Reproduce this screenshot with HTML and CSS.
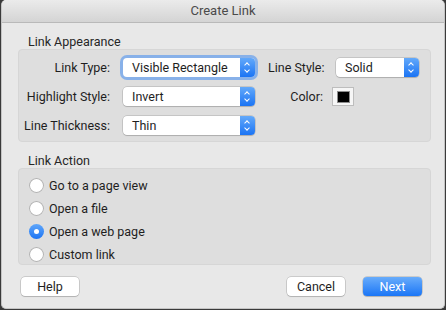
FILE: index.html
```html
<!DOCTYPE html>
<html lang="en">
<head>
  <meta charset="UTF-8" />
  <title>Create Link</title>
  <link rel="stylesheet" href="styles.css">
</head>
<body>

  <div class="window">
    <!-- Title bar -->
    <div class="titlebar">Create Link</div>

    <div class="content">
      <!-- Link Appearance -->
      <div class="section-title">Link Appearance</div>
      <div class="group appearance">
        <div class="label">Link Type:</div>
        <div class="select focused wide"><span>Visible Rectangle</span><i class="arrows"></i></div>
        <div class="label">Line Style:</div>
        <div class="select narrow"><span>Solid</span><i class="arrows"></i></div>

        <div class="label">Highlight Style:</div>
        <div class="select wide"><span>Invert</span><i class="arrows"></i></div>
        <div class="label">Color:</div>
        <div class="color-well"><b></b></div>

        <div class="label">Line Thickness:</div>
        <div class="select wide"><span>Thin</span><i class="arrows"></i></div>
      </div>

      <!-- Link Action -->
      <div class="section-title">Link Action</div>
      <div class="group action">
        <label class="radio"><i></i>Go to a page view</label>
        <label class="radio"><i></i>Open a file</label>
        <label class="radio checked"><i></i>Open a web page</label>
        <label class="radio"><i></i>Custom link</label>
      </div>

      <div class="buttons">
        <button class="btn">Help</button>
        <div class="spacer"></div>
        <button class="btn">Cancel</button>
        <button class="btn primary">Next</button>
      </div>
    </div>
  </div>

</body>
</html>
```

FILE: styles.css
```css
* {
  box-sizing: border-box;
  margin: 0;
  padding: 0;
}

body {
  background: #3a3a3a;
  font-family: Roboto, 'Liberation Sans', sans-serif;
  font-size: 12.5px;
  color: #1e1e1e;
  height: 310px;
  overflow: hidden;
}

.window {
  width: 444px;
  height: 309px;
  margin-left: 1px;
  background: #e8e8e8;
  border: 1px solid #c4c4c4;
  border-top: none;
  border-radius: 5px;
  overflow: hidden;
}

.titlebar {
  height: 23px;
  line-height: 22px;
  text-align: center;
  font-size: 13px;
  color: #4a4a4a;
  background: linear-gradient(#ebebeb, #d4d4d4);
  border-bottom: 1px solid #b9b9b9;
}

.content {
  padding: 11px 13px 0 16px;
}

.section-title {
  line-height: 15px;
  padding-left: 10px;
  color: #262626;
}

.group {
  background: #dedede;
  border: 1px solid #d6d6d6;
  border-radius: 4px;
}

/* appearance grid */
.appearance {
  display: grid;
  grid-template-columns: 91px 132px 55px auto;
  grid-auto-rows: 19px;
  column-gap: 13px;
  row-gap: 10px;
  align-items: center;
  padding: 8px 0 6px 0;
  margin-bottom: 11px;
}

.label {
  text-align: right;
  white-space: nowrap;
}

.select {
  position: relative;
  height: 19px;
  background: #fff;
  border-radius: 4px;
  box-shadow: 0 0 0 0.5px rgba(0, 0, 0, 0.22), 0 1px 1px rgba(0, 0, 0, 0.12);
  display: flex;
  align-items: center;
  padding-left: 9px;
}

.select.narrow {
  width: 83px;
}

.select.focused {
  box-shadow: 0 0 0 3px rgba(100, 158, 238, 0.7);
}

.arrows {
  position: absolute;
  top: 0;
  right: 0;
  width: 15px;
  height: 100%;
  border-radius: 0 4px 4px 0;
  background: linear-gradient(#63a9fa, #1b74f4);
}

.arrows::before,
.arrows::after {
  content: "";
  position: absolute;
  left: 5px;
  width: 3px;
  height: 3px;
  border-left: 1.2px solid #fff;
  border-top: 1.2px solid #fff;
}

.arrows::before {
  top: 5px;
  transform: rotate(45deg);
}

.arrows::after {
  bottom: 5px;
  transform: rotate(-135deg);
}

.color-well {
  width: 22px;
  height: 19px;
  margin-left: -4px;
  background: #f6f6f6;
  border: 1px solid #bdbdbd;
  display: flex;
  align-items: center;
  justify-content: center;
}

.color-well b {
  width: 13px;
  height: 12px;
  background: #000;
  border: 1px solid #8c8c8c;
}

/* action radios */
.action {
  padding: 5px 0 0 10px;
  height: 97px;
}

.radio {
  display: flex;
  align-items: center;
  height: 23px;
}

.radio i {
  width: 15px;
  height: 15px;
  border-radius: 50%;
  background: #fff;
  box-shadow: inset 0 0 0 1px #b3b3b3;
  margin-right: 5px;
  display: flex;
  align-items: center;
  justify-content: center;
}

.radio.checked i {
  background: linear-gradient(#5fa6fa, #1d75f4);
  box-shadow: none;
}

.radio.checked i::after {
  content: "";
  width: 5px;
  height: 5px;
  border-radius: 50%;
  background: #fff;
}

/* buttons */
.buttons {
  display: flex;
  gap: 18px;
  padding: 12px 9px 0 3px;
}

.spacer {
  flex: 1;
}

.btn {
  width: 58px;
  height: 19px;
  font-family: inherit;
  font-size: 12.5px;
  color: #1e1e1e;
  background: #fff;
  border: none;
  border-radius: 4px;
  box-shadow: 0 0 0 0.5px rgba(0, 0, 0, 0.25), 0 1px 1px rgba(0, 0, 0, 0.12);
}

.btn.primary {
  width: 59px;
  color: #fff;
  background: linear-gradient(#68acfb, #1b76f6);
}
```
